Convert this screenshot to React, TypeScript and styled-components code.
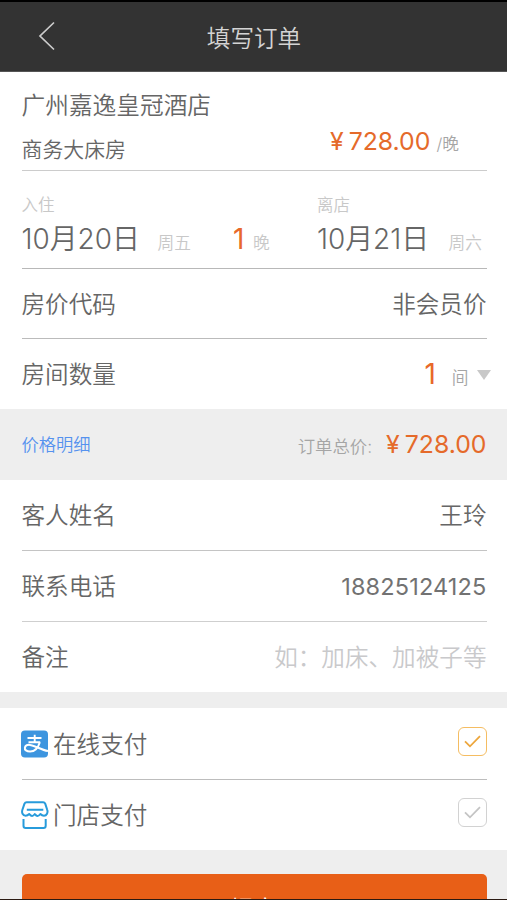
import React from "react";
import styled, { createGlobalStyle } from "styled-components";

const GlobalStyle = createGlobalStyle`
  * { box-sizing: border-box; }
  body {
    margin: 0;
    background: #eeeeee;
    overflow: hidden;
    font-family: Inter, "Noto Sans CJK SC DemiLight", "Noto Sans CJK SC", sans-serif;
    font-weight: 350;
    color: #666666;
  }
`;

const Screen = styled.main`
  width: 507px;
  height: 900px;
  display: flex;
  flex-direction: column;
  overflow: hidden;
  border-bottom: 1px solid #2b1a12;
  background: #eeeeee;
`;

const Header = styled.header`
  flex: none;
  height: 72px;
  display: grid;
  grid-template-columns: 94px 1fr 94px;
  align-items: center;
  padding-top: 4px;
  background: #333333;
  border-top: 2px solid #000000;
  border-bottom: 1px solid #555555;
`;

const BackButton = styled.button`
  height: 60px;
  padding: 0 0 6px;
  border: 0;
  background: none;
  display: flex;
  align-items: center;
  justify-content: center;
`;

const Title = styled.h1`
  margin: 0;
  padding-left: 1px;
  font-size: 23.6px;
  font-weight: 350;
  line-height: 30px;
  text-align: center;
  color: #d4d4d4;
`;

const Panel = styled.section<{ $gap?: number }>`
  flex: none;
  padding: 0 20.5px 0 21.5px;
  background: #ffffff;
  margin-bottom: ${(p) => p.$gap ?? 0}px;
`;

const Row = styled.div<{ $height: number; $line?: string }>`
  height: ${(p) => p.$height}px;
  padding-top: 2px;
  display: flex;
  align-items: center;
  justify-content: space-between;
  font-size: 23.6px;
  line-height: 30px;
  white-space: nowrap;
  border-bottom: ${(p) => (p.$line ? `1px solid ${p.$line}` : "0")};
`;

const HotelBlock = styled.div`
  height: 99px;
  padding-top: 19px;
  border-bottom: 1px solid #cccccc;
  white-space: nowrap;
`;

const HotelName = styled.div`
  font-size: 23.7px;
  line-height: 30px;
`;

const RoomLine = styled.div`
  display: grid;
  grid-template-columns: 308.5px 1fr;
  align-items: start;
`;

const RoomType = styled.div`
  padding-top: 14px;
  font-size: 20.9px;
  line-height: 30px;
`;

const NightPrice = styled.div`
  padding-top: 5px;
  display: flex;
  align-items: baseline;
`;

const Price = styled.span`
  display: inline-flex;
  gap: 5px;
  font-size: 24.8px;
  font-weight: 400;
  line-height: 30px;
  color: #e56a2a;
`;

const Unit = styled.span<{ $left?: number; $size?: number; $tone?: string }>`
  margin-left: ${(p) => p.$left ?? 0}px;
  font-size: ${(p) => p.$size ?? 16.7}px;
  color: ${(p) => p.$tone ?? "#c8c8c8"};
`;

const Stay = styled.div`
  height: 98px;
  display: grid;
  grid-template-columns: 211.5px 84px 1fr;
  padding-top: 20px;
  border-bottom: 1px solid #b8b8b8;
  white-space: nowrap;
`;

const Caption = styled.div`
  height: 26px;
  font-size: 16.5px;
  line-height: 28px;
  color: #c8c8c8;
`;

const DateLine = styled.div`
  display: flex;
  align-items: baseline;
  line-height: 45px;
`;

const DateText = styled.span<{ $width: number }>`
  width: ${(p) => p.$width}px;
  font-size: 27.9px;
`;

const Count = styled.span`
  font-size: 28px;
  font-weight: 400;
  color: #e8692a;
`;

const Quantity = styled.span`
  display: flex;
  align-items: baseline;
  margin: 2px -4px 0 0;
`;

const Caret = styled.i`
  align-self: center;
  margin: 0 0 2px 8px;
  border: 7.5px solid transparent;
  border-top: 10px solid #c8c8c8;
  border-bottom: 0;
`;

const Summary = styled.section`
  flex: none;
  height: 71px;
  padding: 0 20.5px 2px 21.5px;
  display: flex;
  align-items: center;
  justify-content: space-between;
  background: #eeeeee;
`;

const DetailLink = styled.a`
  font-size: 17.3px;
  color: #5592ee;
`;

const Total = styled.div`
  display: flex;
  align-items: baseline;
  gap: 14px;
`;

const TotalLabel = styled.span`
  font-size: 17.4px;
  color: #a5a5a5;
`;

const Phone = styled.span`
  margin-top: -1px;
  font-size: 23.5px;
  font-weight: 400;
  letter-spacing: 0.15px;
  color: #727272;
`;

const Hint = styled.span`
  color: #c9c9cb;
`;

const Method = styled.span`
  display: flex;
  align-items: center;
  gap: 4px;

  svg {
    margin: 0 0 2px -0.5px;
  }
`;

const Check = styled.span<{ $on?: boolean }>`
  width: 29px;
  height: 29px;
  margin-bottom: 7px;
  display: flex;
  align-items: center;
  justify-content: center;
  border: 1.5px solid ${(p) => (p.$on ? "#f5bd62" : "#d2d2d2")};
  border-radius: 6px;
  color: ${(p) => (p.$on ? "#eda63c" : "#c4c4c4")};
`;

const Submit = styled.button`
  flex: none;
  height: 70px;
  margin: 0 20.5px 0 21.5px;
  padding: 0;
  border: 0;
  border-radius: 5px;
  background: #e85f17;
  color: #ffffff;
  font: inherit;
  font-size: 23.6px;
  line-height: 71px;
`;

const BackIcon = () => (
  <svg width="18" height="30" viewBox="0 0 18 30" fill="none" stroke="#cccccc" strokeWidth="1.7">
    <path d="M16 1.5 2 15l14 13.5" />
  </svg>
);

const AlipayIcon = () => (
  <svg width="28" height="28" viewBox="0 0 28 28" fill="none" stroke="#ffffff">
    <rect x="0" y="0.5" width="27" height="27" rx="4" fill="#3d95df" stroke="none" />
    <path d="M6.5 8h14M13.7 4.8v7.5M7.5 12.2h11.7" strokeWidth="1.9" />
    <path
      d="M18.8 12.2c-1.4 4.8-4.7 9.3-9.7 9.3-3.6 0-5.7-1.6-5.2-3.9.4-2 2.5-2.9 5-2.7 4.3.4 11 4.800 18.100 6.200"
      strokeWidth="2"
    />
  </svg>
);

const StoreIcon = () => (
  <svg width="28" height="28" viewBox="0 0 28 28" fill="none" stroke="#279bdb" strokeWidth="2" strokeLinejoin="round">
    <path d="M5.6 1.2h16.5c1.1 0 1.7.5 2.1 1.4l2 6.2c1 2.6-.4 5.900-3.200 5.900-1.800 0-2.500-.5-3.600-1.700-1 1.300-1.700 2-3 2s-1.700-.8-2.600-2c-.9 1.200-1.400 2-2.700 2s-1.900-.8-2.900-2c-1.100 1.200-2 1.700-3.600 1.700C1.600 14.700.5 11.600 1.400 8.800l2.100-6.200c.4-.9 1-1.400 2.100-1.400Z" />
    <path d="M5.800 8.700h16.500M2.500 18v6.800c0 1.400.8 2.200 2.200 2.200h17.800c1.400 0 2.200-.8 2.200-2.200V18" />
  </svg>
);

const CheckMark = () => (
  <svg width="17" height="13" viewBox="0 0 17 13" fill="none" stroke="currentColor" strokeWidth="1.8">
    <path d="m1 6.3 5 5L16 1.2" />
  </svg>
);

export default function App() {
  return (
    <>
      <GlobalStyle />
      <Screen>
        <Header>
          <BackButton aria-label="返回">
            <BackIcon />
          </BackButton>
          <Title>填写订单</Title>
        </Header>

        <Panel>
          <HotelBlock>
            <HotelName>广州嘉逸皇冠酒店</HotelName>
            <RoomLine>
              <RoomType>商务大床房</RoomType>
              <NightPrice>
                <Price><span>¥</span><span>728.00</span></Price>
                <Unit $left={6} $tone="#a5a5a5">/晚</Unit>
              </NightPrice>
            </RoomLine>
          </HotelBlock>
          <Stay>
            <div>
              <Caption>入住</Caption>
              <DateLine>
                <DateText $width={136}>10月20日</DateText>
                <Unit>周五</Unit>
              </DateLine>
            </div>
            <div>
              <Caption />
              <DateLine>
                <Count>1</Count>
                <Unit $left={8.5}>晚</Unit>
              </DateLine>
            </div>
            <div>
              <Caption>离店</Caption>
              <DateLine>
                <DateText $width={131.5}>10月21日</DateText>
                <Unit>周六</Unit>
              </DateLine>
            </div>
          </Stay>
          <Row $height={70} $line="#bbbbbb">
            <span>房价代码</span>
            <span>非会员价</span>
          </Row>
          <Row $height={70}>
            <span>房间数量</span>
            <Quantity>
              <Count>1</Count>
              <Unit $left={16} $tone="#a5a5a5">间</Unit>
              <Caret />
            </Quantity>
          </Row>
        </Panel>

        <Summary>
          <DetailLink>价格明细</DetailLink>
          <Total>
            <TotalLabel>订单总价:</TotalLabel>
            <Price><span>¥</span><span>728.00</span></Price>
          </Total>
        </Summary>

        <Panel $gap={16}>
          <Row $height={71} $line="#c4c4c4">
            <span>客人姓名</span>
            <span>王玲</span>
          </Row>
          <Row $height={71} $line="#cfcfcf">
            <span>联系电话</span>
            <Phone>18825124125</Phone>
          </Row>
          <Row $height={70}>
            <span>备注</span>
            <Hint>如：加床、加被子等</Hint>
          </Row>
        </Panel>

        <Panel $gap={24}>
          <Row $height={72} $line="#bdbdbd">
            <Method><AlipayIcon />在线支付</Method>
            <Check $on><CheckMark /></Check>
          </Row>
          <Row $height={70}>
            <Method><StoreIcon />门店支付</Method>
            <Check><CheckMark /></Check>
          </Row>
        </Panel>

        <Submit>提交</Submit>
      </Screen>
    </>
  );
}
